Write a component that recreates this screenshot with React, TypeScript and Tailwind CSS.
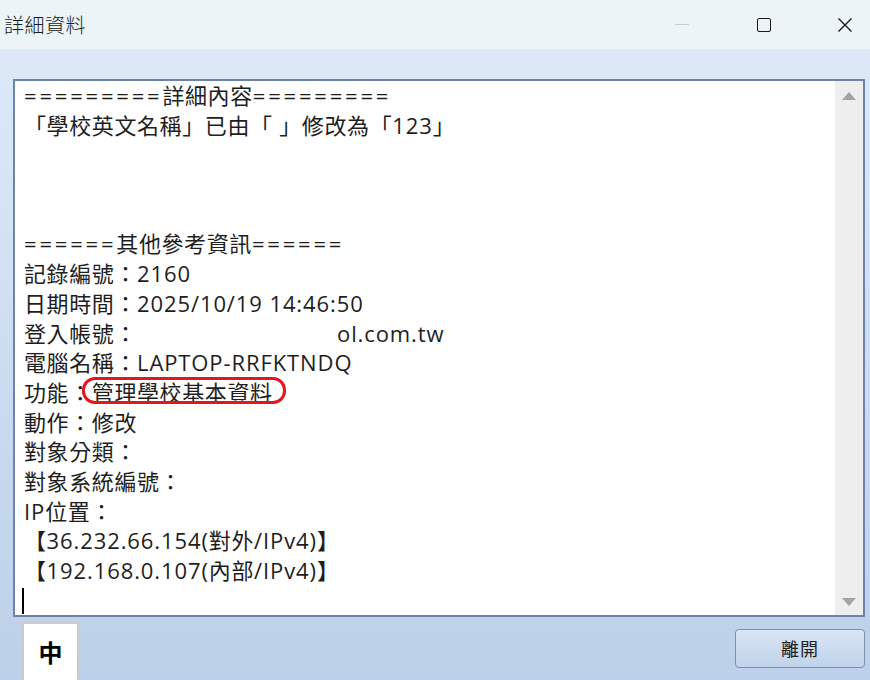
import React from "react";

const CJK = '"Noto Sans CJK TC", sans-serif';
const LAT = '"Open Sans", "Noto Sans CJK TC", sans-serif';

function Runs({ text }: { text: string }) {
  const parts = text.match(/[\x20-\x7e]+|[^\x20-\x7e]+/g) || [];
  return (
    <>
      {parts.map((p, i) => {
        const ascii = /^[\x20-\x7e]+$/.test(p);
        if (ascii) {
          const eq = /^=+$/.test(p);
          return (
            <span
              key={i}
              style={{ fontFamily: LAT, letterSpacing: eq ? "2.8px" : "0.9px" }}
            >
              {p}
            </span>
          );
        }
        return (
          <span key={i} style={{ fontFamily: CJK, letterSpacing: "0.6px" }}>
            {p}
          </span>
        );
      })}
    </>
  );
}

export default function App() {
  const lines: React.ReactNode[] = [
    <Runs text="=========詳細內容=========" />,
    <Runs text="「學校英文名稱」已由「 」修改為「123」" />,
    "\u00a0",
    "\u00a0",
    "\u00a0",
    <Runs text="======其他參考資訊======" />,
    <Runs text="記錄編號：2160" />,
    <Runs text="日期時間：2025/10/19 14:46:50" />,
    <>
      <Runs text="登入帳號：" />
      <span className="inline-block w-[200px]" />
      <Runs text="ol.com.tw" />
    </>,
    <Runs text="電腦名稱：LAPTOP-RRFKTNDQ" />,
    <>
      <Runs text="功能：管理學校基本資料" />
      <span className="absolute left-[58px] top-[0px] w-[204px] h-[27px] rounded-[13px] border-[3px] border-[#e3161e]" />
    </>,
    <Runs text="動作：修改" />,
    <Runs text="對象分類：" />,
    <Runs text="對象系統編號：" />,
    <Runs text="IP位置：" />,
    <Runs text="【36.232.66.154(對外/IPv4)】" />,
    <Runs text="【192.168.0.107(內部/IPv4)】" />,
  ];
  return (
    <div className="w-[870px] h-[680px] flex flex-col overflow-hidden" style={{ fontFamily: CJK }}>
      <div className="h-[49px] flex items-center bg-[#edf4f8] shrink-0">
        <div className="pl-[4px] text-[20px] text-[#1b1b1b] flex-1" style={{ fontFamily: CJK, fontWeight: 300, letterSpacing: "0.5px" }}>
          詳細資料
        </div>
        <div className="w-[14px] h-[1px] bg-[#c3cad0] mr-[68px]" />
        <div className="w-[14px] h-[14px] border-[1.5px] border-[#1a1a1a] rounded-[2px] mr-[66px]" />
        <svg width="16" height="16" viewBox="0 0 16 16" className="mr-[17px]">
          <path d="M1.5 1.5 L14.5 14.5 M14.5 1.5 L1.5 14.5" stroke="#1a1a1a" strokeWidth="1.4" />
        </svg>
      </div>
      <div className="flex-1 flex flex-col bg-gradient-to-b from-[#dde9f7] to-[#bcd0e9] pt-[30px] pl-[13px] pr-[5px]">
        <div className="h-[538px] border-2 border-[#6e83a9] bg-white flex">
          <div className="flex-1 pl-[9px] mt-[-1px] text-[22px] leading-[29.7px] text-[#1e1e1e]">
            {lines.map((l, i) => (
              <div key={i} className="relative h-[29.7px] whitespace-pre">{l}</div>
            ))}
            <div className="h-[29.7px] flex items-center">
              <div className="w-[1.5px] h-[26px] bg-black ml-[-2px] mt-[3px]" />
            </div>
          </div>
          <div className="w-[28px] bg-[#eeeeee] flex flex-col items-center justify-between pt-[11px] pb-[9px]">
            <svg width="14" height="8" viewBox="0 0 14 8">
              <path d="M7 0 L14 8 L0 8 Z" fill="#a3a3a3" />
            </svg>
            <svg width="14" height="8" viewBox="0 0 14 8">
              <path d="M0 0 L14 0 L7 8 Z" fill="#a3a3a3" />
            </svg>
          </div>
        </div>
        <div className="flex-1 flex items-start justify-between">
          <div className="ml-[9px] mt-[5px] w-[57px] h-[60px] border-2 border-[#cacaca] bg-white flex items-center justify-center">
            <span className="text-[24px] font-bold text-black">中</span>
          </div>
          <div className="mt-[12px] w-[130px] h-[39px] rounded-[4px] border border-[#7d90ab] bg-gradient-to-b from-[#d9e6f5] to-[#c0d3ea] flex items-center justify-center text-[18px] text-[#222]" style={{ letterSpacing: "1px" }}>
            離開
          </div>
        </div>
      </div>
    </div>
  );
}
